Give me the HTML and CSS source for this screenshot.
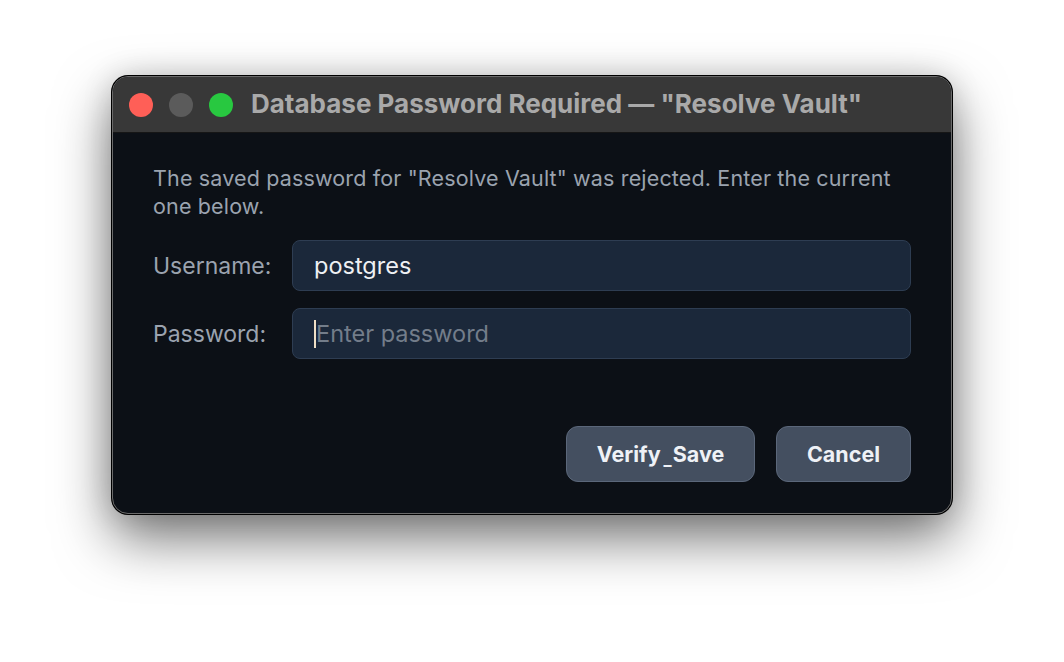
FILE: index.html
```html
<!DOCTYPE html>
<html>
<head>
<meta charset="utf-8">
<link rel="stylesheet" href="styles.css">
</head>
<body>
<div class="stage">
  <div class="window">
    <div class="titlebar">
      <div class="lights">
        <span class="light red"></span>
        <span class="light gray"></span>
        <span class="light green"></span>
      </div>
      <div class="title">Database Password Required — "Resolve Vault"</div>
    </div>
    <div class="content">
      <p class="message">The saved password for "Resolve Vault" was rejected. Enter the current one below.</p>
      <div class="form">
        <label class="label">Username:</label>
        <div class="field"><span class="value">postgres</span></div>
        <label class="label">Password:</label>
        <div class="field"><span class="caret"></span><span class="placeholder">Enter password</span></div>
      </div>
      <div class="actions">
        <button class="btn btn-verify">Verify<span class="us">_</span>Save</button>
        <button class="btn btn-cancel">Cancel</button>
      </div>
    </div>
  </div>
</div>
</body>
</html>
```

FILE: styles.css
```css
html, body {
  margin: 0;
  padding: 0;
  background: #ffffff;
  width: 1064px;
  height: 662px;
  overflow: hidden;
  font-family: "Inter", "Noto Sans", sans-serif;
}

.stage {
  padding: 76px 0 0 112px;
}

.window {
  width: 840px;
  height: 438px;
  box-sizing: border-box;
  border-radius: 16px;
  background: #0c1016;
  border: 1px solid #6a6a6a;
  box-shadow: 0 0 0 1px #000000, 0 24px 55px rgba(0, 0, 0, 0.55), 0 0 30px rgba(0, 0, 0, 0.15);
  overflow: hidden;
  display: flex;
  flex-direction: column;
}

.titlebar {
  height: 55px;
  flex: none;
  background: #383838;
  border-bottom: 1px solid #161616;
  display: flex;
  align-items: center;
  padding-left: 16px;
}

.lights {
  display: flex;
  gap: 16px;
  margin-right: 18px;
}

.light {
  width: 24px;
  height: 24px;
  border-radius: 50%;
  display: block;
}
.red { background: #ff5f57; }
.gray { background: #5b5b5b; }
.green { background: #28c840; }

.title {
  color: #a9a9a9;
  font-weight: 700;
  font-size: 26px;
  letter-spacing: 0;
  white-space: nowrap;
  margin-top: -2px;
}

.content {
  flex: 1;
  padding: 31px 40px 0 40px;
  display: flex;
  flex-direction: column;
}

.message {
  margin: 0;
  color: #9ba3af;
  font-size: 21.5px;
  letter-spacing: 0.15px;
  line-height: 28px;
}

.form {
  margin-top: 20px;
  display: grid;
  grid-template-columns: 139px 1fr;
  row-gap: 17px;
  align-items: center;
}

.label {
  color: #9ba3af;
  font-size: 23px;
}

.field {
  height: 51px;
  box-sizing: border-box;
  background: #1b283a;
  border: 1.5px solid #2e3d52;
  border-radius: 8px;
  display: flex;
  align-items: center;
  padding-left: 21px;
  font-size: 23.5px;
}

.value {
  color: #eef0f3;
}

.placeholder {
  color: #737d8a;
}

.caret {
  display: block;
  width: 2px;
  height: 28px;
  background: #eedfc6;
}

.actions {
  margin-top: 67px;
  display: flex;
  justify-content: flex-end;
  gap: 21px;
}

.btn {
  height: 56px;
  box-sizing: border-box;
  border-radius: 12px;
  background: #444f60;
  border: 1.5px solid #5b677a;
  color: #eef1f6;
  font-family: "Inter", "Noto Sans", sans-serif;
  font-weight: 700;
  font-size: 21.5px;
  padding: 0;
}

.btn-verify { width: 189px; }
.btn-cancel { width: 135px; }

.us {
  display: inline-block;
  transform: translateY(3px);
  font-size: 17px;
  margin: 0 1px 0 3px;
}
```
